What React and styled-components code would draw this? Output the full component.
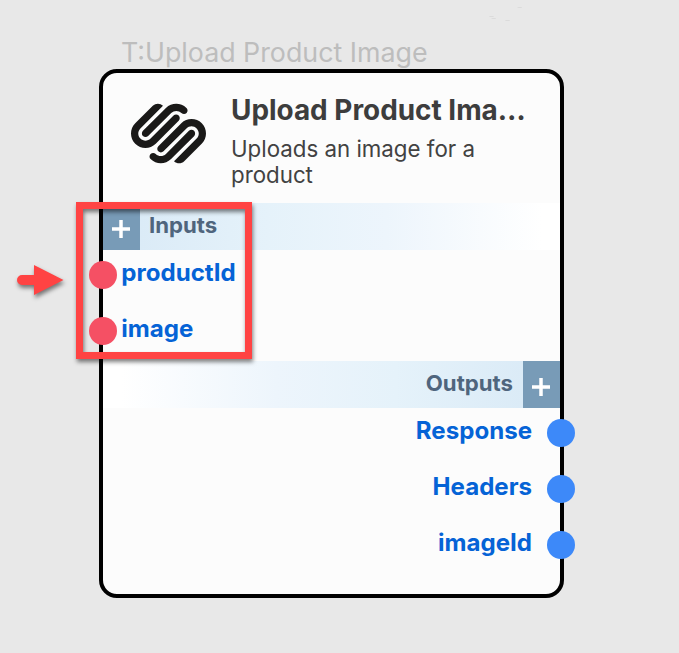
import React from "react";
import styled, { createGlobalStyle } from "styled-components";
import { SiSquarespace } from "react-icons/si";

const GlobalStyle = createGlobalStyle`
  * { box-sizing: border-box; }
  body { margin: 0; background: #e8e8e8; font-family: Inter, sans-serif; }
`;

const Canvas = styled.main`
  position: relative;
  width: 679px;
  height: 653px;
  overflow: hidden;
  background: #e8e8e8;
  padding: 35px 0 0 98.5px;
`;

const NodeLabel = styled.div`
  height: 34.4px;
  padding-left: 22.5px;
  font-size: 26.8px;
  line-height: 34px;
  color: #bdbdbd;
  white-space: nowrap;
`;

const NodeCard = styled.article`
  width: 465px;
  height: 528.4px;
  border: 4px solid #000;
  border-radius: 18px;
  background: #fcfcfc;
`;

const Header = styled.header`
  display: flex;
  height: 129.6px;
  padding: 22.7px 0 0 28.5px;
`;

const Logo = styled(SiSquarespace)`
  flex: none;
  width: 75px;
  height: 75px;
  color: #1a1918;
`;

const HeaderText = styled.div`
  margin: -3.2px 0 0 25px;
  width: 298px;
`;

const Title = styled.h1`
  margin: 0;
  font-size: 27.9px;
  line-height: 34px;
  font-weight: 700;
  color: #3d3d3d;
  white-space: nowrap;
`;

const Description = styled.p`
  margin: 9px 0 0;
  width: 265px;
  font-size: 22.3px;
  line-height: 26px;
  color: #424242;
`;

const SectionBar = styled.div`
  display: flex;
  flex-direction: ${(p) => (p.$end ? "row-reverse" : "row")};
  height: 47px;
  background: linear-gradient(${(p) => (p.$end ? "to left" : "to right")}, #d8e9f6, #e5f2fa 36%, #edf5fc 62%, #fff 96%);
`;

const AddButton = styled.button`
  display: flex;
  align-items: center;
  justify-content: center;
  width: 37px;
  height: 47px;
  padding: 5px 0 0;
  border: 0;
  background: #789bb7;
`;

const SectionName = styled.span`
  padding: 0 9.5px;
  font-size: 22.2px;
  line-height: 44px;
  font-weight: 700;
  color: #4f657d;
`;

const PortList = styled.ul`
  list-style: none;
  margin: 0;
  padding: 0;
  height: ${(p) => p.$height}px;
`;

const Port = styled.li`
  display: flex;
  align-items: center;
  flex-direction: ${(p) => (p.$end ? "row-reverse" : "row")};
  gap: ${(p) => (p.$end ? 14.5 : 4)}px;
  height: 56px;
  margin: 0 -15px 0 -13.2px;
`;

const Dot = styled.span`
  width: 28px;
  height: 28px;
  margin-top: -6px;
  border-radius: 50%;
  background: ${(p) => (p.$end ? "#3d89f9" : "#f55064")};
`;

const PortName = styled.span`
  margin-top: -9px;
  font-size: 24.1px;
  line-height: 30px;
  font-weight: 700;
  color: #0563d6;
`;

const Highlight = styled.div`
  position: absolute;
  left: 76px;
  top: 202px;
  width: 176px;
  height: 157px;
  border: 7px solid #ff4343;
  filter: drop-shadow(1px 3px 2px rgba(0, 0, 0, 0.5));
`;

const Arrow = styled.svg`
  position: absolute;
  left: 10px;
  top: 258px;
  filter: drop-shadow(1px 3px 2px rgba(0, 0, 0, 0.5));
`;

const Specks = styled.svg`
  position: absolute;
  left: 480px;
  top: 0;
`;

const Plus = () => (
  <svg width="20" height="20" viewBox="0 0 20 20" stroke="#fff" strokeWidth="3.500">
    <path d="M1 10H19M10 1V19" />
  </svg>
);

const Section = ({ title, ports, end, height }) => (
  <section>
    <SectionBar $end={end}>
      <AddButton aria-label={`Add to ${title}`}>
        <Plus />
      </AddButton>
      <SectionName>{title}</SectionName>
    </SectionBar>
    <PortList $height={height}>
      {ports.map((name) => (
        <Port key={name} $end={end}>
          <Dot $end={end} />
          <PortName>{name}</PortName>
        </Port>
      ))}
    </PortList>
  </section>
);

export default function App() {
  return (
    <>
      <GlobalStyle />
      <Canvas>
        <NodeLabel>T:Upload Product Image</NodeLabel>
        <NodeCard>
          <Header>
            <Logo />
            <HeaderText>
              <Title>Upload Product Ima…</Title>
              <Description>Uploads an image for a product</Description>
            </HeaderText>
          </Header>
          <Section title="Inputs" ports={["productId", "image"]} height={111} />
          <Section title="Outputs" ports={["Response", "Headers", "imageId"]} height={168} end />
        </NodeCard>
        <Highlight />
        <Arrow width="60" height="46" fill="#ff4343">
          <path d="M12 17H24V7L53.500 22L24 37V27H12A5 5 0 0 1 12 17Z" />
        </Arrow>
        <Specks width="50" height="28" fill="#dadada">
          <ellipse cx="11.500" cy="16.500" rx="2.500" ry="0.600" />
          <ellipse cx="13.700" cy="18.500" rx="2.500" ry="0.600" />
          <ellipse cx="27.500" cy="20.500" rx="2.500" ry="0.600" />
          <ellipse cx="39.700" cy="7.500" rx="2.500" ry="0.600" />
        </Specks>
      </Canvas>
    </>
  );
}
